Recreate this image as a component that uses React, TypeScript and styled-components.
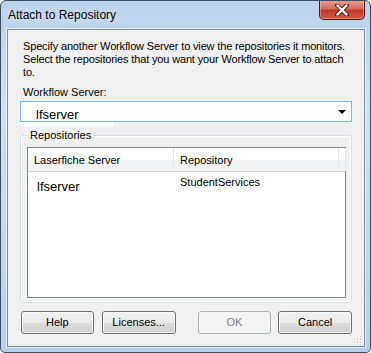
import styled, { createGlobalStyle } from "styled-components";

const GlobalStyle = createGlobalStyle`
  html, body {
    margin: 0;
    padding: 0;
    background: #ffffff;
  }
  * {
    box-sizing: border-box;
  }
`;

const Window = styled.div`
  position: relative;
  width: 371px;
  height: 353px;
  border: 1px solid #3e4c5e;
  border-radius: 6px 6px 5px 5px;
  background: linear-gradient(180deg, #bad1ec 0%, #d2e1f3 30%, #c6d9f0 60%, #b8cfeb 100%);
  display: flex;
  flex-direction: column;
  padding: 0 5px 5px 6px;
  font-family: "Liberation Sans", Arial, sans-serif;
  overflow: hidden;
`;

const TitleBar = styled.div`
  height: 28px;
  display: flex;
  align-items: flex-start;
  padding-left: 1px;
`;

const Title = styled.span`
  margin-top: 7px;
  font-size: 12px;
  line-height: 14px;
  color: #000000;
  text-shadow: 0 0 6px rgba(255, 255, 255, 0.9);
`;

const CloseButton = styled.div`
  margin-left: auto;
  margin-top: -1px;
  width: 46px;
  height: 20px;
  border: 1px solid #4b1710;
  border-top: none;
  border-radius: 0 0 5px 5px;
  background: linear-gradient(180deg, #e8a698 0%, #d46b5b 45%, #c0392b 55%, #cf5a44 100%);
  box-shadow: inset 0 0 0 1px rgba(255, 200, 190, 0.45);
  display: flex;
  align-items: center;
  justify-content: center;
`;

const Client = styled.div`
  position: relative;
  flex: 1;
  border: 1px solid #7b8ca3;
  box-shadow: 0 0 0 1px rgba(255, 255, 255, 0.55);
  background: #f0f0f0;
  display: flex;
  flex-direction: column;
  padding: 10px 12px 0 12px;
  font-size: 11px;
  line-height: 13px;
  color: #000000;
`;

const Intro = styled.div`
  margin-left: 3px;
  white-space: nowrap;
  letter-spacing: -0.15px;
`;

const FieldLabel = styled.div`
  margin-top: 7px;
  margin-left: 3px;
`;

const Combo = styled.div`
  margin-top: 2px;
  height: 21px;
  border: 1px solid #7eb4ea;
  background: #ffffff;
  display: flex;
  align-items: flex-end;
  padding-left: 15px;
  position: relative;
`;

const ComboText = styled.span`
  font-size: 13px;
  line-height: 15px;
  margin-bottom: -1px;
`;

const ComboArrow = styled.span`
  position: absolute;
  right: 5px;
  top: 8px;
  width: 0;
  height: 0;
  border-left: 4px solid transparent;
  border-right: 4px solid transparent;
  border-top: 4px solid #000000;
`;

const ComboTail = styled.div`
  width: 92px;
  height: 5px;
  margin-left: 1px;
  background: #ffffff;
`;

const Group = styled.fieldset`
  margin: 2px 0 0 0;
  padding: 5px 5px 4px 6px;
  border: 1px solid #d5dfe5;
  border-radius: 3px;
  box-shadow: inset 0 0 0 1px #ffffff;
  min-width: 0;
`;

const GroupLegend = styled.legend`
  margin-left: 1px;
  padding: 0 2px;
  font-size: 11px;
  line-height: 13px;
`;

const ListView = styled.div`
  height: 151px;
  border: 1px solid #828790;
  background: #ffffff;
  display: flex;
  flex-direction: column;
`;

const HeaderRow = styled.div`
  height: 24px;
  display: flex;
  background: linear-gradient(180deg, #ffffff 0%, #ffffff 50%, #f1f2f4 55%, #f3f4f6 100%);
  border-bottom: 1px solid #d5d5d5;
`;

const HeaderCell = styled.div<{ $w: number }>`
  width: ${(p) => p.$w}px;
  flex: ${(p) => (p.$w ? "none" : "1")};
  border-right: 1px solid #e3e8ee;
  padding-left: 6px;
  display: flex;
  align-items: center;
  padding-top: 1px;
`;

const ItemRow = styled.div`
  display: flex;
  height: 24px;
`;

const ItemCell = styled.div<{ $w: number; $big?: boolean; $top: number }>`
  width: ${(p) => p.$w}px;
  padding-left: ${(p) => (p.$big ? 9 : 6)}px;
  padding-top: ${(p) => p.$top}px;
  font-size: ${(p) => (p.$big ? 13 : 11)}px;
  line-height: ${(p) => (p.$big ? 15 : 13)}px;
  white-space: nowrap;
`;

const ButtonRow = styled.div`
  margin-top: 8px;
  margin-left: 1px;
  display: flex;
`;

const Button = styled.div<{ $w: number; $gap: number; $disabled?: boolean }>`
  width: ${(p) => p.$w}px;
  height: 23px;
  margin-left: ${(p) => p.$gap}px;
  border: 1px solid ${(p) => (p.$disabled ? "#adb2b5" : "#707070")};
  border-radius: 3px;
  background: ${(p) =>
    p.$disabled
      ? "#f4f4f4"
      : "linear-gradient(180deg, #f2f2f2 0%, #ebebeb 50%, #dddddd 51%, #cfcfcf 100%)"};
  box-shadow: inset 0 0 0 1px ${(p) => (p.$disabled ? "#f4f4f4" : "rgba(255,255,255,0.7)")};
  color: ${(p) => (p.$disabled ? "#838383" : "#000000")};
  display: flex;
  align-items: center;
  justify-content: center;
  font-size: 11px;
`;

const Grip = styled.svg`
  position: absolute;
  right: 1px;
  bottom: 1px;
`;

function CloseGlyph() {
  return (
    <svg width="14" height="12" viewBox="0 0 14 12">
      <path
        d="M2 1 L12 11 M12 1 L2 11"
        stroke="#5a1e16"
        strokeWidth="4.2"
        strokeLinecap="round"
      />
      <path
        d="M2.5 1.5 L11.5 10.5 M11.5 1.5 L2.5 10.5"
        stroke="#ffffff"
        strokeWidth="2.4"
        strokeLinecap="round"
      />
    </svg>
  );
}

function ResizeGrip() {
  const dots = [
    [9, 3],
    [9, 6],
    [6, 6],
    [9, 9],
    [6, 9],
    [3, 9],
  ];
  return (
    <Grip width="12" height="12" viewBox="0 0 12 12">
      {dots.map(([x, y]) => (
        <g key={`${x}-${y}`}>
          <rect x={x + 1} y={y + 1} width="1" height="1" fill="#ffffff" />
          <rect x={x} y={y} width="1" height="1" fill="#b8b8b8" />
        </g>
      ))}
    </Grip>
  );
}

export default function App() {
  return (
    <>
      <GlobalStyle />
      <Window>
        <TitleBar>
          <Title>Attach to Repository</Title>
          <CloseButton>
            <CloseGlyph />
          </CloseButton>
        </TitleBar>
        <Client>
          <Intro>
            Specify another Workflow Server to view the repositories it monitors.
            <br />
            Select the repositories that you want your Workflow Server to attach
            <br />
            to.
          </Intro>
          <FieldLabel>Workflow Server:</FieldLabel>
          <Combo>
            <ComboText>lfserver</ComboText>
            <ComboArrow />
          </Combo>
          <ComboTail />
          <Group>
            <GroupLegend>Repositories</GroupLegend>
            <ListView>
              <HeaderRow>
                <HeaderCell $w={146}>Laserfiche Server</HeaderCell>
                <HeaderCell $w={165}>Repository</HeaderCell>
                <HeaderCell $w={0} />
              </HeaderRow>
              <ItemRow>
                <ItemCell $w={146} $big $top={7}>
                  lfserver
                </ItemCell>
                <ItemCell $w={165} $top={4}>
                  StudentServices
                </ItemCell>
              </ItemRow>
            </ListView>
          </Group>
          <ButtonRow>
            <Button $w={73} $gap={0}>Help</Button>
            <Button $w={74} $gap={8}>Licenses...</Button>
            <Button $w={74} $gap={22} $disabled>OK</Button>
            <Button $w={74} $gap={7}>Cancel</Button>
          </ButtonRow>
          <ResizeGrip />
        </Client>
      </Window>
    </>
  );
}
